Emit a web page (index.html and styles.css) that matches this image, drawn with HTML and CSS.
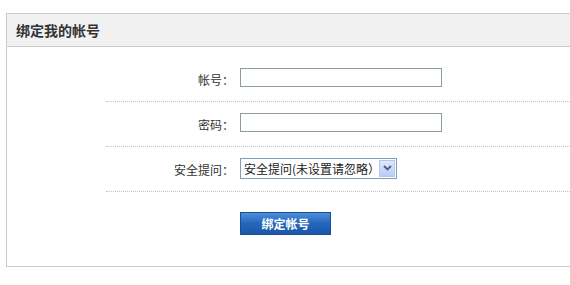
FILE: index.html
```html
<!DOCTYPE html>
<html lang="zh-CN">
<head>
<meta charset="utf-8">
<title>绑定我的帐号</title>
<link rel="stylesheet" href="styles.css">
</head>
<body>
<div class="panel">
  <div class="panel-head">绑定我的帐号</div>
  <form class="panel-body">
    <div class="row">
      <label class="label">帐号：</label>
      <input class="text" type="text">
    </div>
    <div class="row">
      <label class="label">密码：</label>
      <input class="text" type="password">
    </div>
    <div class="row">
      <label class="label">安全提问：</label>
      <div class="select">
        <span class="select-text">安全提问(未设置请忽略）</span>
        <span class="select-btn">
          <svg width="9" height="6" viewBox="0 0 9 6"><path d="M1 1 L4.5 4.5 L8 1" fill="none" stroke="#4a5f8c" stroke-width="1.8"/></svg>
        </span>
      </div>
    </div>
    <div class="actions">
      <button class="btn" type="button">绑定帐号</button>
    </div>
  </form>
</div>
</body>
</html>
```
FILE: styles.css
```css
html, body {
  margin: 0;
  padding: 0;
  overflow: hidden;
  background: #fff;
}
body {
  font-family: "Noto Sans CJK SC", "Liberation Sans", sans-serif;
  font-size: 12px;
  color: #333;
}
.panel {
  margin: 13px 0 0 6px;
  border: 1px solid #cccccc;
  border-right: none;
}
.panel-head {
  height: 32px;
  line-height: 32px;
  padding-left: 9px;
  background: #f1f1f1;
  border-bottom: 1px solid #cccccc;
  font-size: 14px;
  font-weight: bold;
  color: #333;
}
.panel-body {
  margin: 0;
  padding: 10px 0 0 99px;
}
.row {
  display: flex;
  align-items: center;
  height: 44px;
  border-bottom: 1px dotted #c4c4c4;
}
.label {
  width: 128px;
  text-align: right;
  color: #333;
  margin-right: 6px;
}
.text {
  box-sizing: border-box;
  width: 202px;
  height: 19px;
  margin: 0;
  padding: 0 2px;
  border: 1px solid #8a9ea2;
  background: #fff;
  font: inherit;
  margin-top: -3px;
}
.select {
  box-sizing: border-box;
  display: flex;
  align-items: center;
  width: 157px;
  height: 21px;
  border: 1px solid #7f9db9;
  background: #fff;
  padding-left: 3px;
  margin-top: -2px;
}
.select-text {
  flex: 1;
  white-space: nowrap;
  overflow: hidden;
  color: #222;
  font-size: 12px;
}
.select-btn {
  box-sizing: border-box;
  width: 16px;
  height: 17px;
  margin-right: 1px;
  display: flex;
  align-items: center;
  justify-content: center;
  background: linear-gradient(#dfe8fb, #b9cdf5);
  border: 1px solid #b4c6ec;
}
.actions {
  padding: 20px 0 31px 134px;
}
.btn {
  display: block;
  box-sizing: border-box;
  width: 91px;
  height: 23px;
  margin: 0;
  padding: 0;
  border: 1px solid #1b4d92;
  background: linear-gradient(#4d8fdc, #2566bb 50%, #1c57a8);
  color: #fff;
  font-family: inherit;
  font-size: 12px;
  font-weight: bold;
  cursor: pointer;
}
```
